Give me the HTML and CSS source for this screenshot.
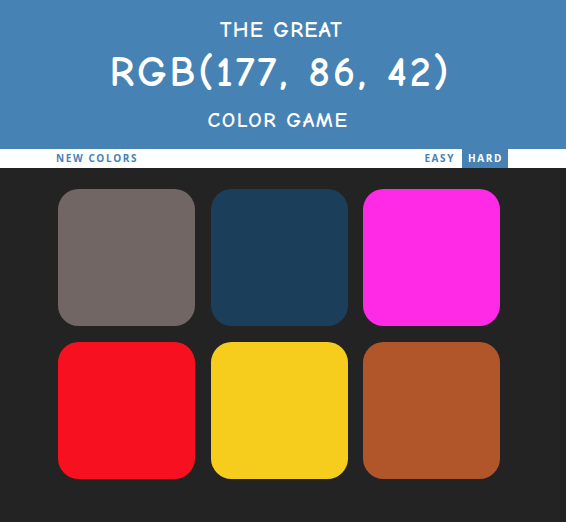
FILE: index.html
```html
<!DOCTYPE html>
<html lang="en">
<head>
<meta charset="utf-8">
<title>The Great RGB Color Game</title>
<link rel="stylesheet" href="styles.css">
</head>
<body>
<header class="banner">
  <h1 class="title">
    <span class="title-top">THE GREAT</span>
    <span class="title-rgb">RGB(177, 86, 42)</span>
    <span class="title-bottom">COLOR GAME</span>
  </h1>
</header>
<nav class="stripe">
  <div class="stripe-inner">
    <button class="btn">NEW COLORS</button>
    <div class="modes">
      <button class="btn">EASY</button>
      <button class="btn btn-selected">HARD</button>
    </div>
  </div>
</nav>
<main class="board">
  <div class="square sq-1"></div>
  <div class="square sq-2"></div>
  <div class="square sq-3"></div>
  <div class="square sq-4"></div>
  <div class="square sq-5"></div>
  <div class="square sq-6"></div>
</main>
</body>
</html>
```
FILE: styles.css
```css
* { box-sizing: border-box; }
html, body { margin: 0; padding: 0; }
body {
  background: #232323;
  width: 566px;
  height: 522px;
  overflow: hidden;
}
.banner {
  background: #4682b4;
  color: #ffffff;
  height: 149px;
  text-align: center;
  font-family: "Comic Sans MS", "Comic Neue", "Open Sans", sans-serif;
}
.title {
  margin: 0;
  padding-top: 15px;
  font-weight: 700;
}
.title span { display: block; }
.title-top { font-size: 22px; line-height: 30px; letter-spacing: 1.3px; padding-right: 3px; }
.title-rgb { font-size: 42px; line-height: 56px; letter-spacing: 3px; padding-right: 5px; }
.title-bottom { font-size: 21px; line-height: 32px; letter-spacing: 1.6px; margin-top: 3px; padding-right: 10px; }

.stripe {
  background: #ffffff;
  height: 19px;
}
.stripe-inner {
  margin-left: 50px;
  width: 458px;
  height: 19px;
  display: flex;
  justify-content: space-between;
  align-items: stretch;
}
.modes { display: flex; gap: 2px; }
.btn {
  border: none;
  background: none;
  color: #4682b4;
  font-family: "Open Sans", sans-serif;
  font-weight: 700;
  font-size: 10px;
  letter-spacing: 1.6px;
  padding: 0 5px 0 6px;
  margin: 0;
  height: 19px;
  line-height: 19px;
}
.btn-selected {
  background: #4682b4;
  color: #ffffff;
}
.board {
  margin-left: 58px;
  padding-top: 21px;
  display: grid;
  grid-template-columns: repeat(3, 137px);
  column-gap: 15.5px;
  row-gap: 16px;
}
.square {
  width: 137px;
  height: 137px;
  border-radius: 15%;
}
.sq-1 { background: #726664; }
.sq-2 { background: #1b3f5b; }
.sq-3 { background: #ff2ae6; }
.sq-4 { background: #f7101f; }
.sq-5 { background: #f7cd1d; }
.sq-6 { background: #b1562a; }
```
